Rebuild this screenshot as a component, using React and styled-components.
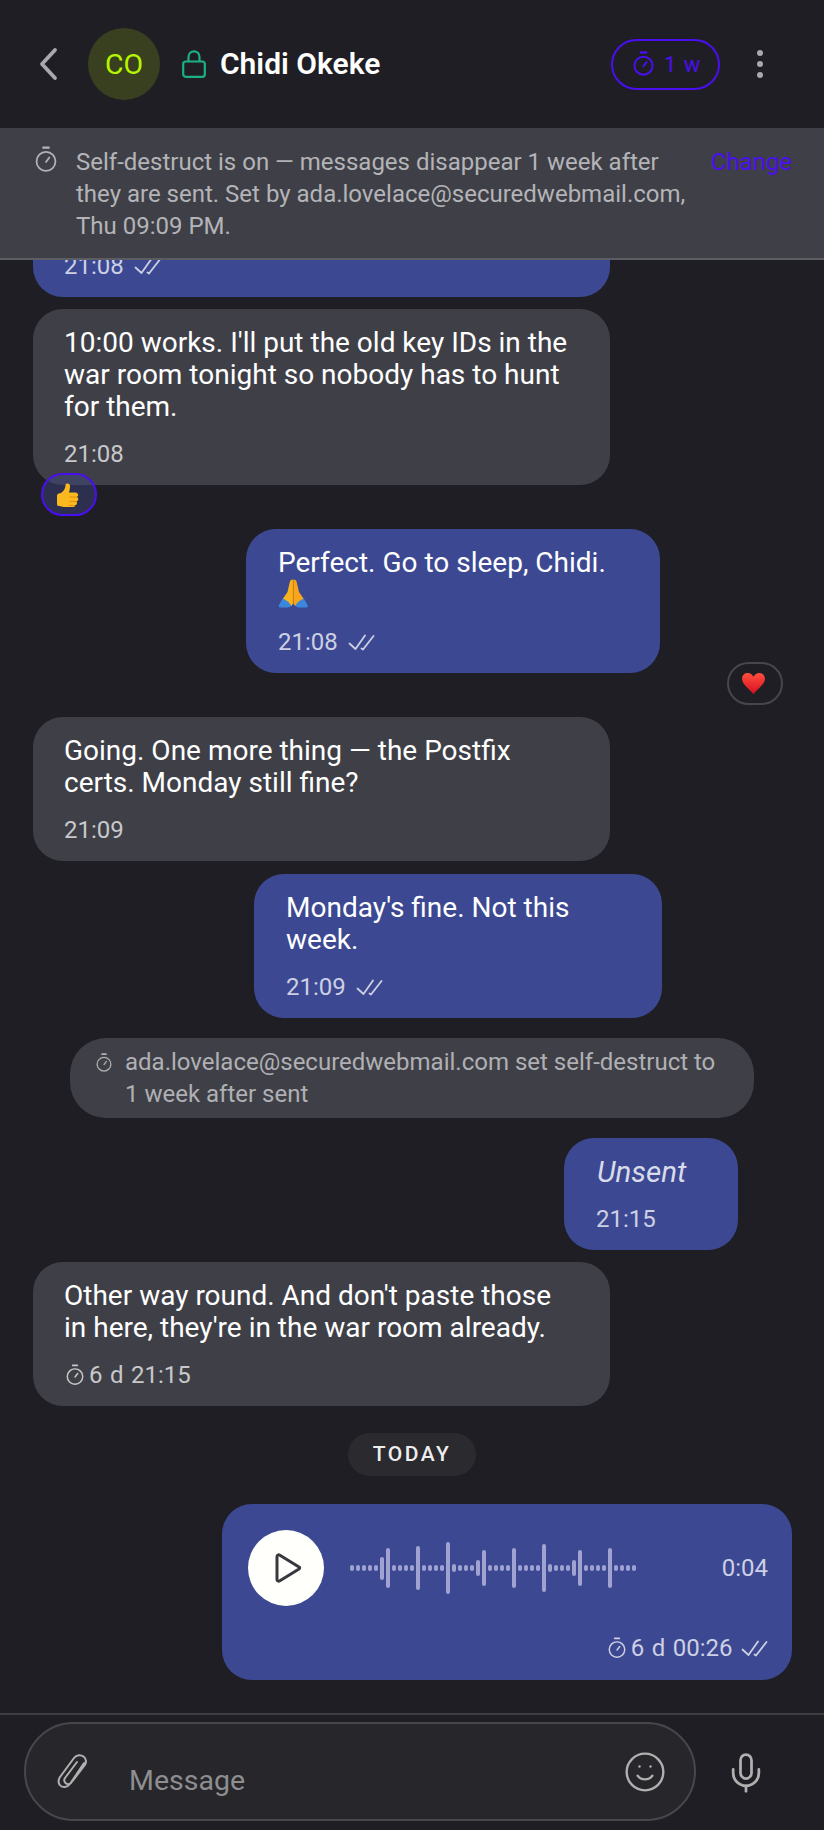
import React from "react";
import styled, { createGlobalStyle } from "styled-components";
import { Mic, Smile } from "lucide-react";

const INDIGO = "#4a0ff0";
const BLUE = "#3c4992";
const GREY = "#3f4047";

const GlobalStyle = createGlobalStyle`
  html, body {
    margin: 0;
    padding: 0;
    background: #1e1e24;
  }
  * {
    box-sizing: border-box;
  }
`;

const Page = styled.div`
  display: flex;
  flex-direction: column;
  width: 824px;
  height: 1830px;
  overflow: hidden;
  background: #1e1e24;
  color: #fff;
  font-family: Roboto, "Liberation Sans", sans-serif;
`;

const Header = styled.header`
  display: flex;
  align-items: center;
  flex: none;
  height: 128px;
  padding: 0 61px 0 38px;
`;

const Avatar = styled.div`
  display: flex;
  align-items: center;
  justify-content: center;
  width: 72px;
  height: 72px;
  margin: 0 22px 0 30px;
  border-radius: 50%;
  background: #384020;
  color: #b6f500;
  font-size: 28.5px;
`;

const Name = styled.h1`
  flex: 1;
  margin: 0 0 0 14px;
  font-size: 30px;
  line-height: 36px;
  font-weight: 600;
`;

const TimerPill = styled.div`
  display: flex;
  align-items: center;
  gap: 10px;
  width: 109px;
  height: 51px;
  padding-left: 20px;
  margin-right: 37px;
  border: 2px solid ${INDIGO};
  border-radius: 26px;
  color: ${INDIGO};
  font-size: 22px;
  letter-spacing: 1px;
`;

const Kebab = styled.div`
  display: flex;
  flex-direction: column;
  gap: 5px;
`;

const Dot = styled.span`
  width: 6px;
  height: 6px;
  border-radius: 50%;
  background: #a9a9ad;
`;

const Banner = styled.div`
  position: relative;
  z-index: 1;
  display: flex;
  align-items: flex-start;
  flex: none;
  height: 132px;
  padding: 18px 32px 0 35px;
  background: ${GREY};
  border-bottom: 2px solid #5c5d63;
  color: #b4b4b8;
  font-size: 24px;
  line-height: 32px;
`;

const BannerText = styled.div`
  flex: none;
  width: 622px;
  margin-left: 19px;
`;

const ChangeLink = styled.a`
  margin-left: auto;
  color: ${INDIGO};
`;

const List = styled.main`
  display: flex;
  flex-direction: column;
  justify-content: flex-end;
  flex: 1;
  min-height: 0;
  overflow: hidden;
  padding: 0 32px 33px 33px;
`;

const Bubble = styled.div`
  position: relative;
  flex: none;
  align-self: ${(p) => (p.$mine ? "flex-end" : "flex-start")};
  width: ${(p) => p.$width || 577}px;
  margin-top: ${(p) => p.$top || 12}px;
  margin-right: ${(p) => p.$right || 0}px;
  padding: 18px 31px 15px ${(p) => (p.$mine ? 32 : 31)}px;
  border-radius: 30px;
  background: ${(p) => (p.$blue ? BLUE : GREY)};
  font-size: 28px;
  line-height: 32px;
`;

const EmojiLine = styled.div`
  height: 32px;
`;

const Meta = styled.div`
  display: flex;
  align-items: center;
  justify-content: ${(p) => (p.$end ? "flex-end" : "flex-start")};
  gap: ${(p) => p.$gap || 0}px;
  margin-top: ${(p) => p.$top || 15}px;
  padding-left: ${(p) => p.$indent || 0}px;
  color: ${(p) => (p.$blue ? "#cdd0e4" : "#c8c8cb")};
  font-size: 24px;
  line-height: 32px;
  word-spacing: 1.5px;
`;

const MetaSpacer = styled.span`
  width: 0;
  margin-left: -1.5px;
`;

const Reaction = styled.div`
  position: absolute;
  display: flex;
  align-items: center;
  justify-content: center;
  width: 56px;
  height: 43px;
  padding-right: 4px;
  border-radius: 22px;
  border: 2px solid ${(p) => (p.$active ? INDIGO : "#46464c")};
  background: ${(p) => (p.$active ? "rgba(63, 72, 130, 0.45)" : "transparent")};
  ${(p) => (p.$active ? "left: 8px; bottom: -31px;" : "right: -123px; bottom: -32px;")}
`;

const SystemNote = styled.div`
  display: flex;
  align-items: flex-start;
  gap: 13px;
  flex: none;
  align-self: flex-start;
  width: 684px;
  margin: 20px 0 8px 37px;
  padding: 8px 30px 8px 26px;
  border-radius: 36px;
  background: ${GREY};
  color: #b0b0b4;
  font-size: 24px;
  line-height: 32px;
`;

const NoteIcon = styled.span`
  display: flex;
  margin-top: 7px;
`;

const UnsentText = styled.div`
  height: 32px;
  margin-left: 1px;
  font-style: italic;
  font-size: 29.5px;
  line-height: 32px;
  color: #d9dbea;
`;

const DayPill = styled.div`
  flex: none;
  align-self: center;
  width: 128px;
  height: 43px;
  margin: 27px 0 28px -1px;
  border-radius: 22px;
  background: #2a2a2f;
  color: #eeeeef;
  font-size: 21px;
  font-weight: 500;
  line-height: 43px;
  letter-spacing: 2.5px;
  text-align: center;
`;

const VoiceBubble = styled.div`
  flex: none;
  align-self: flex-end;
  width: 570px;
  padding: 26px 24px 16px 26px;
  border-radius: 30px;
  background: ${BLUE};
`;

const VoiceRow = styled.div`
  display: flex;
  align-items: center;
`;

const PlayButton = styled.div`
  display: flex;
  align-items: center;
  justify-content: center;
  flex: none;
  width: 76px;
  height: 76px;
  padding-left: 4px;
  border-radius: 50%;
  background: #fffffb;
`;

const Wave = styled.div`
  display: flex;
  align-items: center;
  gap: 2px;
  flex: 1;
  margin-left: 26px;
`;

const WaveBar = styled.span`
  width: 4px;
  height: ${(p) => p.$h}px;
  border-radius: 2px;
  background: #a0a3d1;
`;

const Duration = styled.span`
  color: #cdd0e4;
  font-size: 24px;
`;

const Footer = styled.footer`
  display: flex;
  align-items: flex-start;
  flex: none;
  height: 117px;
  padding: 7px 0 0 24px;
  border-top: 2px solid #3d3d42;
`;

const InputBox = styled.div`
  display: flex;
  align-items: center;
  width: 672px;
  height: 99px;
  padding: 0 27px 0 31px;
  border: 2px solid #47474c;
  border-radius: 50px;
  background: #26262b;
  color: #b0b0b0;
`;

const Placeholder = styled.span`
  flex: 1;
  margin: 18px 0 0 40px;
  color: #8e8e90;
  font-size: 28.5px;
`;

const MicButton = styled.div`
  display: flex;
  margin: 29px 0 0 28px;
  color: #b0b0b0;
`;

function Stopwatch({ size = 24, color = "currentColor", width = 1.6 }) {
  return (
    <svg width={size} height={size * 1.2} viewBox="0 0 20 24" fill="none" stroke={color} strokeWidth={width} strokeLinecap="round">
      <circle cx="10" cy="14" r="8.6" />
      <path d="M7.5 1.5 H12.5" strokeWidth={width * 1.3} />
      <path d="M10 14.5 L13 10.5" />
    </svg>
  );
}

function DoubleCheck({ color = "#cdd0e4" }) {
  return (
    <svg width="27" height="17" viewBox="0 0 27 17" fill="none" stroke={color} strokeWidth="1.8" strokeLinecap="round" strokeLinejoin="round">
      <path d="M1.5 9.5 L7.5 15 L17 1.5" />
      <path d="M13.5 14.5 L15 15.5 L25.5 2" />
    </svg>
  );
}

function ThumbEmoji() {
  return (
    <svg width="23" height="24" viewBox="0 0 23 24">
      <path d="M1 12.5 C1 11 3 10 5 10 C8 8 9.5 5 9.5 2 C9.5 0 14 -0.5 14 3 C14 5.5 13.5 7.5 13 9.5 H19 C22.5 9.5 23 13 21 14 C23 15 22.5 18 20.5 18.5 C21.5 20 21 22 19 22.5 C19 24 18 24 16 24 H8 C6 24 5 23 3 23 C1.5 23 1 22 1 21 Z" fill="#fbb81f" />
      <path d="M13.5 14 H21 M13.5 18.5 H20.5 M13 22.5 H19" stroke="#e58f0a" strokeWidth="1.1" />
    </svg>
  );
}

function PrayEmoji() {
  return (
    <svg width="30" height="29" viewBox="0 0 30 29">
      <path d="M5 19 L1 26 Q0 28.5 2.5 28.5 H9.5 Q12 28.5 13.5 26.5 L11 22 Z" fill="#3c86dc" />
      <path d="M25.5 19 L29.5 26 Q30.5 28.5 28 28.5 H21 Q18.5 28.5 17 26.5 L19.5 22 Z" fill="#3c86dc" />
      <path d="M15 0.5 C13 0.5 12 1.5 11.7 3.5 L9.5 13 L5 19.5 L10.5 23 L13.5 27 L15 24.5 Z" fill="#fbb11c" />
      <path d="M15.5 0.5 C17.5 0.5 18.5 1.5 18.8 3.5 L21 13 L25.5 19.5 L20 23 L17 27 L15.5 24.5 Z" fill="#f7a51b" />
      <path d="M15.25 1 V24" stroke="#d98a0c" strokeWidth="1" />
    </svg>
  );
}

function HeartEmoji() {
  return (
    <svg width="23" height="21" viewBox="0 0 24 22">
      <defs>
        <linearGradient id="heartFill" x1="0" y1="0" x2="0" y2="1">
          <stop offset="0" stopColor="#ff4f3e" />
          <stop offset="1" stopColor="#d80f1f" />
        </linearGradient>
      </defs>
      <path d="M12 22 C8 17 0 12 0 6 C0 2 3 0 6 0 C9 0 11 2 12 4 C13 2 15 0 18 0 C21 0 24 2 24 6 C24 12 16 17 12 22 Z" fill="url(#heartFill)" />
    </svg>
  );
}

const WAVE = [
  6, 6, 6, 6, 6, 23, 40, 6, 6, 6, 6, 44, 6, 6, 6, 6, 52, 8, 6, 6, 6, 16, 36, 6, 6, 6, 6, 40,
  6, 6, 6, 6, 48, 8, 6, 6, 6, 16, 36, 6, 6, 6, 6, 40, 6, 6, 6, 6,
];

export default function App() {
  return (
    <Page>
      <GlobalStyle />
      <Header>
        <svg width="20" height="38" viewBox="0 0 20 38" fill="none" stroke="#a9a9ad" strokeWidth="3.8" strokeLinecap="round" strokeLinejoin="round">
          <path d="M17 5 L4 19 L17 33" />
        </svg>
        <Avatar>CO</Avatar>
        <svg width="24" height="28" viewBox="0 0 24 28" fill="none" stroke="#1cb084" strokeWidth="2.2">
          <rect x="1.2" y="11.5" width="21.6" height="15.3" rx="2.5" />
          <path d="M6.5 11 V7 C6.5 -0.5 17.5 -0.5 17.5 7 V11" />
        </svg>
        <Name>Chidi Okeke</Name>
        <TimerPill>
          <Stopwatch size={21} width={1.9} />
          <span>1 w</span>
        </TimerPill>
        <Kebab>
          <Dot />
          <Dot />
          <Dot />
        </Kebab>
      </Header>

      <Banner>
        <Stopwatch size={22} color="#b4b4b8" />
        <BannerText>
          Self-destruct is on — messages disappear 1 week after they are sent. Set by ada.lovelace@securedwebmail.com, Thu 09:09 PM.
        </BannerText>
        <ChangeLink>Change</ChangeLink>
      </Banner>

      <List>
        <Bubble $blue>
          <Meta $blue $gap={10}>
            21:08 <DoubleCheck />
          </Meta>
        </Bubble>

        <Bubble>
          10:00 works. I'll put the old key IDs in the war room tonight so nobody has to hunt for them.
          <Meta>21:08</Meta>
          <Reaction $active>
            <ThumbEmoji />
          </Reaction>
        </Bubble>

        <Bubble $blue $mine $width={414} $right={132} $top={44}>
          Perfect. Go to sleep, Chidi.
          <EmojiLine>
            <PrayEmoji />
          </EmojiLine>
          <Meta $blue $gap={10}>
            21:08 <DoubleCheck />
          </Meta>
          <Reaction>
            <HeartEmoji />
          </Reaction>
        </Bubble>

        <Bubble $top={44}>
          Going. One more thing — the Postfix certs. Monday still fine?
          <Meta>21:09</Meta>
        </Bubble>

        <Bubble $blue $mine $width={408} $right={130} $top={13}>
          Monday's fine. Not this week.
          <Meta $blue $gap={10}>
            21:09 <DoubleCheck />
          </Meta>
        </Bubble>

        <SystemNote>
          <NoteIcon>
            <Stopwatch size={16} color="#b0b0b4" />
          </NoteIcon>
          <span>ada.lovelace@securedwebmail.com set self-destruct to 1 week after sent</span>
        </SystemNote>

        <Bubble $blue $mine $width={174} $right={54}>
          <UnsentText>Unsent</UnsentText>
          <Meta $blue>21:15</Meta>
        </Bubble>

        <Bubble>
          Other way round. And don't paste those in here, they're in the war room already.
          <Meta $gap={5} $indent={2}>
            <Stopwatch size={18} color="#c8c8cb" /> 6 d 21:15
          </Meta>
        </Bubble>

        <DayPill>TODAY</DayPill>

        <VoiceBubble>
          <VoiceRow>
            <PlayButton>
              <svg width="28" height="30" viewBox="0 0 28 30" fill="none" stroke="#38383f" strokeWidth="3" strokeLinejoin="round">
                <path d="M3 3.5 C3 2 4.5 1.5 5.5 2 L25 14 C26 14.8 26 15.5 25 16 L5.5 28 C4.5 28.5 3 28 3 26.5 Z" />
              </svg>
            </PlayButton>
            <Wave>
              {WAVE.map((h, i) => (
                <WaveBar key={i} $h={h} />
              ))}
            </Wave>
            <Duration>0:04</Duration>
          </VoiceRow>
          <Meta $blue $end $gap={5} $top={26}>
            <Stopwatch size={18} color="#cdd0e4" /> 6 d 00:26
            <MetaSpacer />
            <DoubleCheck />
          </Meta>
        </VoiceBubble>
      </List>

      <Footer>
        <InputBox>
          <svg width="32" height="35" viewBox="0 0 32 35" fill="none" stroke="#b0b0b0" strokeWidth="2" strokeLinecap="round" strokeLinejoin="round">
            <path d="M27 9 L13 30 C10.5 33.5 5 34 2.8 31 C1 28.5 1.5 25.5 3 23 L17 4 C19.5 0.5 24 0.5 26.5 2.5 C29.5 5 29.5 8.5 27.5 11.5 L14 29 C12.5 30.5 10 30.5 8.5 29 C7 27.5 7 25.5 8 24 L20 8" />
          </svg>
          <Placeholder>Message</Placeholder>
          <Smile size={44} strokeWidth={1.3} />
        </InputBox>
        <MicButton>
          <Mic size={44} strokeWidth={1.5} />
        </MicButton>
      </Footer>
    </Page>
  );
}
